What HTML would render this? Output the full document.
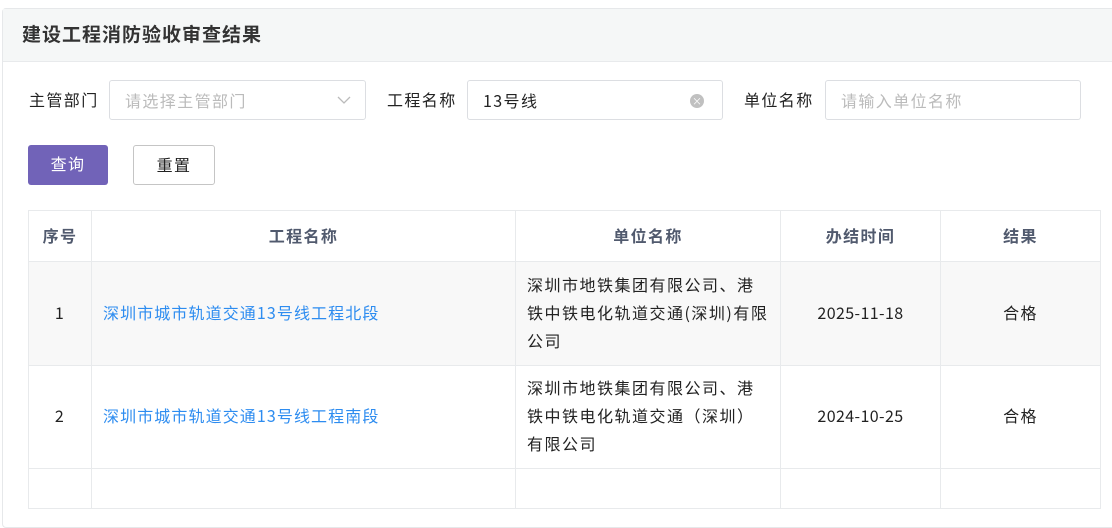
<!DOCTYPE html>
<html><head><meta charset="utf-8"><style>
*{box-sizing:border-box;margin:0;padding:0}
body{width:1112px;height:471px;overflow:hidden;background:#fff;font-family:"Noto Sans CJK SC","Liberation Sans",sans-serif;color:#333;position:relative;letter-spacing:1.4px}
.card{position:absolute;left:2px;top:8px;width:1120px;height:520px;border:1px solid #e6e8ea;border-radius:4px}
.hd{position:absolute;left:0;top:0;right:0;height:53px;background:#f5f7f7;border-bottom:1px solid #e8eaec;font-size:19px;font-weight:bold;color:#333;padding:12px 0 0 19px;line-height:26px;letter-spacing:1px}
.lab{position:absolute;top:88px;font-size:16px;line-height:22px;color:#222}
.inp{position:absolute;top:80px;height:40px;border:1px solid #dcdee2;border-radius:3px;font-size:16px;line-height:38px;padding-left:15px}
.ph{color:#bbb}
.btn{position:absolute;top:145px;height:40px;border-radius:3px;font-size:16px;line-height:37px;text-align:center}
table{position:absolute;left:28px;top:210px;border-collapse:collapse;font-size:16px}
td,th{border:1px solid #e8eaec;text-align:center}
th{height:51px;font-weight:bold;color:#515a6e;background:#fff;padding-bottom:2px}
td{line-height:28px;color:#222;padding-bottom:4px}
a{color:#2d8cf0;text-decoration:none;letter-spacing:1.1px}
.d{letter-spacing:0.4px}
</style></head><body>
<div class="card"><div class="hd">建设工程消防验收审查结果</div></div>
<div class="lab" style="left:29px">主管部门</div>
<div class="inp ph" style="left:109px;width:257px">请选择主管部门<svg style="position:absolute;right:14px;top:14px" width="14" height="10" viewBox="0 0 14 10"><path d="M1 2l6 6 6-6" fill="none" stroke="#bbb" stroke-width="1.3"/></svg></div>
<div class="lab" style="left:387px">工程名称</div>
<div class="inp" style="left:467px;width:256px;color:#222">13号线<span style="position:absolute;left:222px;top:13px;width:14px;height:14px;border-radius:50%;background:#c0c0c0;color:#fff;font-size:10px;line-height:14px;text-align:center;letter-spacing:0">×</span></div>
<div class="lab" style="left:744px">单位名称</div>
<div class="inp ph" style="left:825px;width:256px">请输入单位名称</div>
<div class="btn" style="left:28px;width:80px;background:#7163b8;color:#fff">查询</div>
<div class="btn" style="left:133px;width:82px;border:1px solid #c5c5c5;color:#222">重置</div>
<table>
<tr><th style="width:63px">序号</th><th style="width:424px">工程名称</th><th style="width:265px">单位名称</th><th style="width:160px">办结时间</th><th style="width:160px">结果</th></tr>
<tr style="background:#f8f8f8;height:104px"><td>1</td><td style="text-align:left;padding-left:11px"><a>深圳市城市轨道交通13号线工程北段</a></td><td style="text-align:left;padding:0 10px 4px 11px;letter-spacing:1.5px">深圳市地铁集团有限公司、港铁中铁电化轨道交通(深圳)有限公司</td><td class="d">2025-11-18</td><td>合格</td></tr>
<tr style="height:103px"><td>2</td><td style="text-align:left;padding-left:11px"><a>深圳市城市轨道交通13号线工程南段</a></td><td style="text-align:left;padding:0 10px 4px 11px;letter-spacing:1.5px">深圳市地铁集团有限公司、港铁中铁电化轨道交通（深圳）有限公司</td><td class="d">2024-10-25</td><td>合格</td></tr>
<tr style="height:40px"><td></td><td></td><td></td><td></td><td></td></tr>
</table>
</body></html>
